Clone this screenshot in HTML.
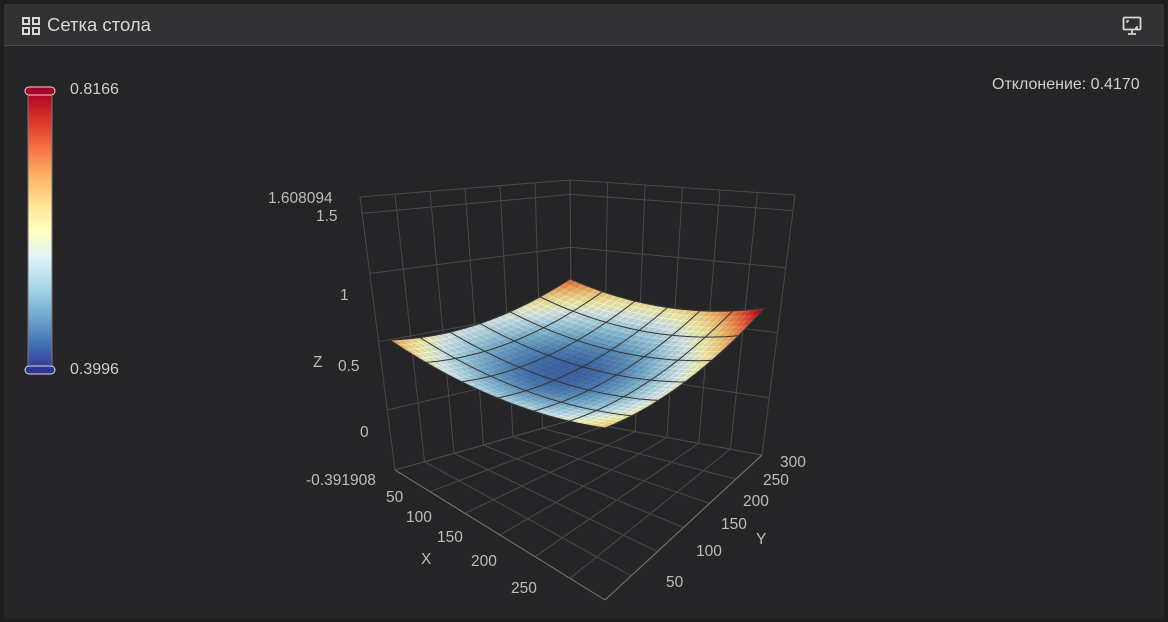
<!DOCTYPE html>
<html><head><meta charset="utf-8"><style>
html,body{margin:0;padding:0;background:#1e1e1f;width:1168px;height:622px;overflow:hidden;font-family:"Liberation Sans","Noto Sans CJK SC",sans-serif;}
.card{position:absolute;left:4px;top:4px;width:1160px;height:614px;background:#252527;border-radius:3px;overflow:hidden;}
.hdr{position:absolute;left:0;top:0;width:1160px;height:41px;background:#313134;border-bottom:1px solid #4a4a4d;}
.title{position:absolute;left:43px;top:10px;color:#d8d8d8;font-size:18.5px;}
.lbl{position:absolute;color:#cfcfcf;font-size:16px;}
svg text{font-family:"Liberation Sans",sans-serif;font-size:15.5px;fill:#bdbdbd;}
</style></head><body>
<div class="card">
<div class="hdr">
<svg style="position:absolute;left:18px;top:13px" width="18" height="18" viewBox="0 0 18 18" fill="none" stroke="#d8d8d8" stroke-width="2"><rect x="1" y="1" width="6" height="6"/><rect x="11" y="1" width="6" height="6"/><rect x="1" y="11" width="6" height="6"/><rect x="11" y="11" width="6" height="6"/></svg>
<div class="title">Сетка стола</div>
<svg style="position:absolute;left:1118px;top:12px" width="20" height="20" viewBox="0 0 20 20" fill="none" stroke="#d8d8d8" stroke-width="1.8"><rect x="1.5" y="1.5" width="17" height="12" rx="1"/><path d="M10 14v3M6 18h8"/><path d="M5 7V5h2M15 10v2h-2" stroke-width="1.5"/></svg>
</div>
<div class="lbl" style="left:988px;top:72px">Отклонение: 0.4170</div>
<div class="lbl" style="left:66px;top:77px">0.8166</div>
<div class="lbl" style="left:66px;top:357px">0.3996</div>
</div>
<svg style="position:absolute;left:0;top:0" width="1168" height="622">
<defs><linearGradient id="cb" x1="0" y1="0" x2="0" y2="1">
<stop offset="0" stop-color="#a50026"/><stop offset=".1" stop-color="#d73027"/><stop offset=".2" stop-color="#f46d43"/><stop offset=".3" stop-color="#fdae61"/><stop offset=".4" stop-color="#fee090"/><stop offset=".5" stop-color="#ffffbf"/><stop offset=".6" stop-color="#e0f3f8"/><stop offset=".7" stop-color="#abd9e9"/><stop offset=".8" stop-color="#74add1"/><stop offset=".9" stop-color="#4575b4"/><stop offset="1" stop-color="#313695"/></linearGradient></defs>
<rect x="28" y="90" width="24" height="280" fill="url(#cb)" stroke="#777" stroke-width="1"/>
<rect x="25" y="87" width="30" height="8" rx="4" fill="#a50026" stroke="#ddd" stroke-width="1"/>
<rect x="25" y="366" width="30" height="8" rx="4" fill="#313695" stroke="#ddd" stroke-width="1"/>
<g id="axes" stroke="#4a4a4c" stroke-width="1" fill="none"></g>
<g id="mesh"></g>
<g>
<text x="268" y="203">1.608094</text><text x="316" y="221">1.5</text>
<text x="340" y="300">1</text><text x="338" y="371">0.5</text><text x="313" y="367">Z</text>
<text x="360" y="437">0</text><text x="306" y="485">-0.391908</text>
<text x="386" y="502">50</text><text x="406" y="522">100</text><text x="437" y="542">150</text>
<text x="421" y="564">X</text><text x="471" y="566">200</text><text x="511" y="593">250</text>
<text x="780" y="467">300</text><text x="763" y="485">250</text><text x="743" y="506">200</text>
<text x="721" y="529">150</text><text x="756" y="544">Y</text><text x="696" y="556">100</text><text x="666" y="587">50</text>
</g>
</svg>
<script>
var ns="http://www.w3.org/2000/svg";
function L(g,a,b,c,d,col){var l=document.createElementNS(ns,"line");l.setAttribute("x1",a);l.setAttribute("y1",b);l.setAttribute("x2",c);l.setAttribute("y2",d);if(col)l.setAttribute("stroke",col);g.appendChild(l);}
var ax=document.getElementById("axes");
var TL=[360,197],BL=[395,470],TB=[570,180],BB=[572,420],TR=[795,195],BR=[762,455],FB=[605,600];
function lerp(p,q,t){return [p[0]+(q[0]-p[0])*t,p[1]+(q[1]-p[1])*t];}
for(var i=0;i<=6;i++){var t=i/6;var a=lerp(TL,TB,t),b=lerp(BL,BB,t);L(ax,a[0],a[1],b[0],b[1]);}
for(var i=0;i<=6;i++){var t=i/6;var a=lerp(TB,TR,t),b=lerp(BB,BR,t);L(ax,a[0],a[1],b[0],b[1]);}
[0,0.06,0.28,0.53,0.78,1].forEach(function(t){var a=lerp(TL,BL,t),b=lerp(TB,BB,t),c=lerp(TR,BR,t);L(ax,a[0],a[1],b[0],b[1]);L(ax,b[0],b[1],c[0],c[1]);});
for(var i=0;i<=6;i++){var t=i/6;var a=lerp(BL,FB,t),b=lerp(BB,BR,t);L(ax,a[0],a[1],b[0],b[1]);var c=lerp(BL,BB,t),d=lerp(FB,BR,t);L(ax,c[0],c[1],d[0],d[1]);}
L(ax,BL[0],BL[1],FB[0],FB[1],"#777");L(ax,FB[0],FB[1],BR[0],BR[1],"#777");
var C0=[390,340],C1=[570,279],C2=[765,308],C3=[605,428];
var V=[0.7,0.74,0.82,0.68];
var stops=[[165,0,38],[215,48,39],[244,109,67],[253,174,97],[254,224,144],[255,255,191],[224,243,248],[171,217,233],[116,173,209],[69,117,180],[49,54,149]];
function col(v){var t=(0.8166-v)/(0.8166-0.3996);t=Math.max(0,Math.min(1,t))*10;var i=Math.min(9,Math.floor(t)),f=t-i;var a=stops[i],b=stops[i+1];return "rgb("+[0,1,2].map(function(k){return Math.round(a[k]+(b[k]-a[k])*f)}).join(",")+")";}
function P(u,v){
 var x=(1-u)*(1-v)*C0[0]+u*(1-v)*C1[0]+u*v*C2[0]+(1-u)*v*C3[0];
 var y=(1-u)*(1-v)*C0[1]+u*(1-v)*C1[1]+u*v*C2[1]+(1-u)*v*C3[1];
 var s=1-((2*u-1)*(2*u-1)+(2*v-1)*(2*v-1))/2;y+=28*s;
 var val=(1-u)*(1-v)*V[0]+u*(1-v)*V[1]+u*v*V[2]+(1-u)*v*V[3]-0.3*s;
 return [x,y,val];}
var m=document.getElementById("mesh"),N=30,h="";
for(var i=0;i<N;i++)for(var j=0;j<N;j++){var a=P(i/N,j/N),b=P((i+1)/N,j/N),c=P((i+1)/N,(j+1)/N),d=P(i/N,(j+1)/N);var c2=col((a[2]+b[2]+c[2]+d[2])/4);
h+='<polygon points="'+[a,b,c,d].map(function(p){return p[0].toFixed(1)+","+p[1].toFixed(1)}).join(" ")+'" fill="'+c2+'" stroke="'+c2+'" stroke-width="0.6" fill-opacity="0.85" stroke-opacity="0.85"/>';}
for(var k=0;k<=6;k++){var pts1=[],pts2=[];for(var s=0;s<=30;s++){var p=P(k/6,s/30);pts1.push(p[0].toFixed(1)+","+p[1].toFixed(1));p=P(s/30,k/6);pts2.push(p[0].toFixed(1)+","+p[1].toFixed(1));}
h+='<polyline points="'+pts1.join(" ")+'" fill="none" stroke="#333" stroke-width="1"/><polyline points="'+pts2.join(" ")+'" fill="none" stroke="#333" stroke-width="1"/>';}
m.innerHTML=h;
</script>
</body></html>
